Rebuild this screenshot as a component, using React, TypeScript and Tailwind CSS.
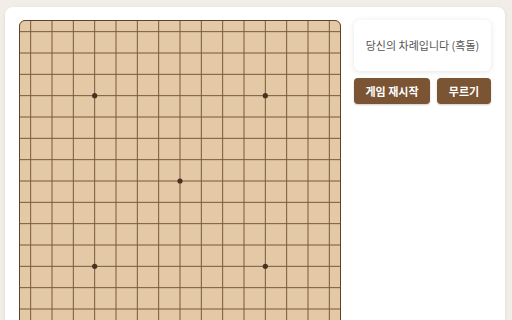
import React from "react";

const N = 15;
const SIZE = 320;
const CELL = SIZE / N;
const stars = [3, 7, 11];

function Board() {
  const lines = [];
  for (let i = 0; i < N; i++) {
    const p = CELL / 2 + CELL * i;
    lines.push(<line key={"h" + i} x1={0} y1={p} x2={SIZE} y2={p} stroke="#7a583a" strokeWidth={1} />);
    lines.push(<line key={"v" + i} x1={p} y1={0} x2={p} y2={SIZE} stroke="#7a583a" strokeWidth={1} />);
  }
  const dots = [];
  for (const r of stars) {
    for (const c of stars) {
      if ((r === 7) !== (c === 7)) continue;
      dots.push(
        <circle key={r + "-" + c} cx={CELL / 2 + CELL * c} cy={CELL / 2 + CELL * r} r={2.6} fill="#4a3020" />
      );
    }
  }
  return (
    <div className="w-[322px] h-[322px] shrink-0 border border-[#5e4129] rounded-md bg-[#e3c9a6] overflow-hidden">
      <svg width={SIZE} height={SIZE} viewBox={`0 0 ${SIZE} ${SIZE}`} className="block">
        {lines}
        {dots}
      </svg>
    </div>
  );
}

export default function App() {
  return (
    <div
      className="min-h-screen bg-[#f1ede7] pt-[7px] pl-[5px]"
      style={{ fontFamily: '"Noto Sans CJK KR", "Noto Sans", sans-serif' }}
    >
      <div className="w-[500px] bg-white rounded-lg shadow-[0_1px_4px_rgba(0,0,0,0.08)] px-[14px] pt-[13px] pb-[14px] flex gap-[13px] items-start">
        <Board />
        <div className="flex flex-col gap-[7px] w-[137px]">
          <div className="h-[51px] bg-white rounded-md shadow-[0_1px_6px_rgba(0,0,0,0.1)] flex items-center justify-center text-[11px] text-[#555]">
            당신의 차례입니다 (흑돌)
          </div>
          <div className="flex justify-between">
            <button className="w-[76px] h-[26px] rounded bg-[#7b5434] text-white text-[11px] font-bold shadow-[0_1px_2px_rgba(0,0,0,0.2)]">
              게임 재시작
            </button>
            <button className="w-[54px] h-[26px] rounded bg-[#7b5434] text-white text-[11px] font-bold shadow-[0_1px_2px_rgba(0,0,0,0.2)]">
              무르기
            </button>
          </div>
        </div>
      </div>
    </div>
  );
}
